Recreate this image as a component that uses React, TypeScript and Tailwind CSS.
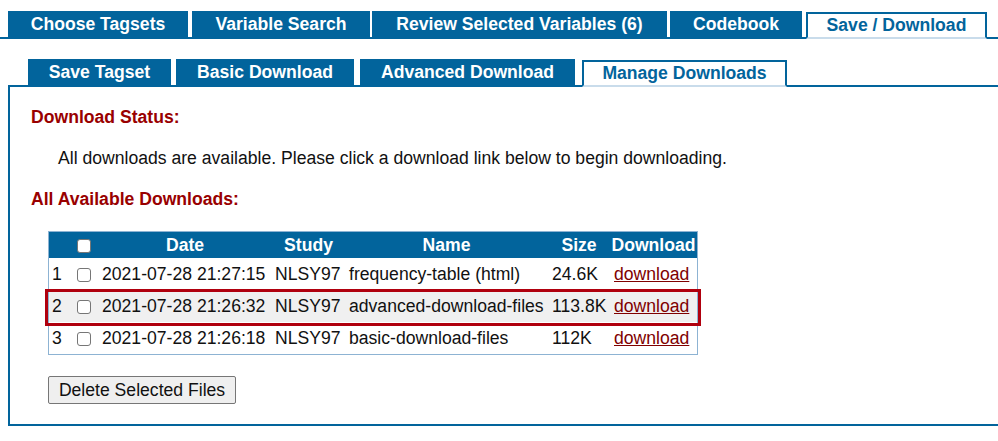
import React from "react";

const topTabs = [
  { label: "Choose Tagsets", w: "w-[180px]", ml: "ml-0" },
  { label: "Variable Search", w: "w-[178px]", ml: "ml-[4px]" },
  { label: "Review Selected Variables (6)", w: "w-[295px]", ml: "ml-[2px]" },
  { label: "Codebook", w: "w-[132px]", ml: "ml-[3px]" },
];

const subTabs = [
  { label: "Save Tagset", w: "w-[143px]", ml: "ml-0" },
  { label: "Basic Download", w: "w-[178px]", ml: "ml-[5px]" },
  { label: "Advanced Download", w: "w-[215px]", ml: "ml-[6px]" },
];

const rows = [
  { n: "1", date: "2021-07-28 21:27:15", study: "NLSY97", name: "frequency-table (html)", size: "24.6K" },
  { n: "2", date: "2021-07-28 21:26:32", study: "NLSY97", name: "advanced-download-files", size: "113.8K" },
  { n: "3", date: "2021-07-28 21:26:18", study: "NLSY97", name: "basic-download-files", size: "112K" },
];

function Box() {
  return (
    <input
      type="checkbox"
      className="appearance-none m-0 w-[14px] h-[14px] align-middle bg-white border border-[#767676] rounded-[3px] inline-block"
    />
  );
}

export default function App() {
  return (
    <div className="w-[998px] h-[441px] overflow-hidden bg-white text-[17.6px] leading-[20px] text-[#111] font-['Liberation_Sans',Arial,sans-serif]">
      {/* top tabs */}
      <div className="pt-[11px] pl-[8px] flex items-end border-b-2 border-[#02649c]">
        {topTabs.map((t) => (
          <div
            key={t.label}
            className={`${t.w} ${t.ml} h-[26px] bg-[#02649c] text-white font-bold flex items-center justify-center whitespace-nowrap`}
          >
            {t.label}
          </div>
        ))}
        <div className="w-[181px] ml-[4px] h-[27px] -mb-[2px] pb-[2px] bg-white border-2 border-[#02649c] border-b-[#c9dceb] text-[#02649c] font-bold flex items-center justify-center whitespace-nowrap">
          Save / Download
        </div>
      </div>

      {/* sub tabs */}
      <div className="mt-[20px] ml-[8px] pl-[20px] flex items-end border-b-2 border-[#02649c]">
        {subTabs.map((t) => (
          <div
            key={t.label}
            className={`${t.w} ${t.ml} h-[26px] bg-[#02649c] text-white font-bold flex items-center justify-center whitespace-nowrap`}
          >
            {t.label}
          </div>
        ))}
        <div className="w-[205px] ml-[7px] h-[27px] -mb-[2px] pb-[2px] bg-white border-2 border-[#02649c] border-b-[#c9dceb] text-[#02649c] font-bold flex items-center justify-center whitespace-nowrap">
          Manage Downloads
        </div>
      </div>

      {/* panel */}
      <div className="ml-[8px] w-[995px] border-x-2 border-b-2 border-[#02649c] pt-[20px] pb-[20px] pl-[21px]">
        <div className="font-bold text-[#990000]">Download Status:</div>
        <div className="mt-[21px] pl-[27px]">
          All downloads are available. Please click a download link below to begin downloading.
        </div>
        <div className="mt-[21px] font-bold text-[#990000]">All Available Downloads:</div>

        <div className="relative mt-[22px] ml-[17px] w-[650px] border border-[#8db3d3]">
          <table className="w-[648px] table-fixed border-separate border-spacing-0">
            <colgroup>
              <col className="w-[21px]" />
              <col className="w-[28px]" />
              <col className="w-[174px]" />
              <col className="w-[73px]" />
              <col className="w-[203px]" />
              <col className="w-[62px]" />
              <col className="w-[87px]" />
            </colgroup>
            <thead>
              <tr className="h-[26px] bg-[#02649c] text-white font-bold">
                <th></th>
                <th className="text-center align-middle leading-[14px]">
                  <Box />
                </th>
                <th className="text-center">Date</th>
                <th className="text-center">Study</th>
                <th className="text-center">Name</th>
                <th className="text-center">Size</th>
                <th className="text-center">Download</th>
              </tr>
            </thead>
            <tbody>
              {rows.map((r, i) => (
                <tr key={r.n} className={`h-[32px] ${i === 1 ? "bg-[#f0f0f0]" : "bg-white"}`}>
                  <td className="pl-[3px]">{r.n}</td>
                  <td className="text-center align-middle leading-[14px]">
                    <Box />
                  </td>
                  <td className="pl-[4px] whitespace-nowrap">{r.date}</td>
                  <td className="pl-[3px] whitespace-nowrap">{r.study}</td>
                  <td className="pl-[4px] whitespace-nowrap">{r.name}</td>
                  <td className="pl-[4px] whitespace-nowrap">{r.size}</td>
                  <td className="pl-[4px]">
                    <a href="#" className="text-[#800000] underline">download</a>
                  </td>
                </tr>
              ))}
            </tbody>
          </table>
          <div className="absolute left-[-4px] top-[57px] w-[656px] h-[37px] border-[3px] border-[#b0000e] pointer-events-none" />
        </div>

        <button className="mt-[21px] ml-[17px] w-[188px] h-[28px] bg-[#efefef] border border-[#767676] rounded-[2px] text-[#111] text-[17.6px]">
          Delete Selected Files
        </button>
      </div>
    </div>
  );
}
